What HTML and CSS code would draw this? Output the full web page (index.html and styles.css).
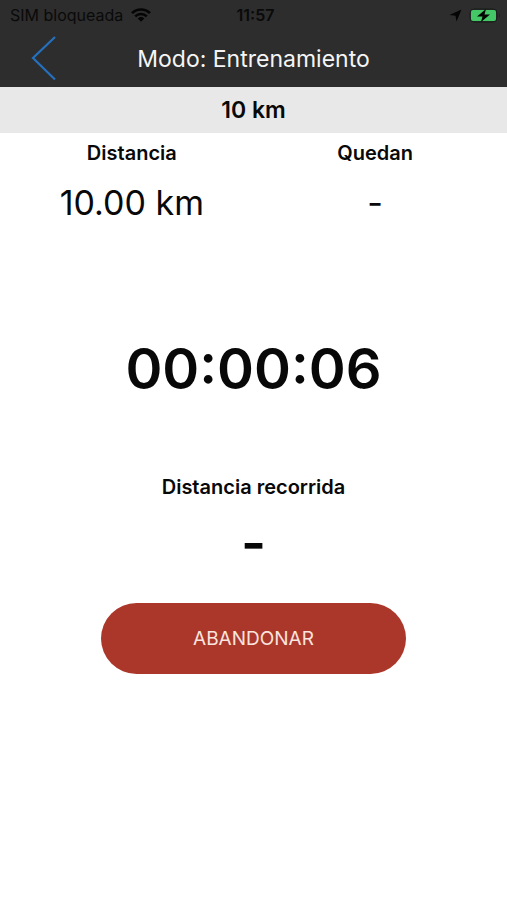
FILE: index.html
```html
<!DOCTYPE html>
<html lang="es">
<head>
<meta charset="utf-8">
<meta name="viewport" content="width=device-width, initial-scale=1">
<title>Modo: Entrenamiento</title>
<link rel="stylesheet" href="styles.css">
</head>
<body>
<header class="top">
  <div class="status">
    <div class="carrier">
      <span>SIM bloqueada</span>
      <svg width="20" height="14" viewBox="0 0 20 14" aria-hidden="true">
        <g fill="none" stroke="#050505" stroke-width="2.6"><path d="M1 5.2C6 .2 14 .2 19 5.2"/><path d="M4.2 8.4C7.5 5.1 12.500 5.100 15.800 8.400"/></g>
        <path fill="#050505" d="M6.700 10.500Q10 7.600 13.300 10.500L10 13.800Z"/>
      </svg>
    </div>
    <time class="clock">11:57</time>
    <div class="indicators">
      <svg width="13" height="13" viewBox="0 0 13 13" aria-hidden="true"><path fill="#050505" d="M12.500 .5 7.500 12.500 6.500 6.700 .500 6Z"/></svg>
      <svg width="32" height="15" viewBox="0 0 32 15" aria-hidden="true">
        <rect x="1" y="1" width="27" height="13" rx="4" fill="none" stroke="#171e19"/>
        <rect x="2" y="2" width="25" height="11" rx="2" fill="#43c767"/>
        <path fill="#1d2420" d="M30 5q2 2.500 0 5Z"/>
        <path fill="#050505" d="M17 1 8 8.500H13.500L12 14 21 6.500H15.500Z"/>
      </svg>
    </div>
  </div>
  <nav class="nav">
    <a class="back" href="#" aria-label="Volver">
      <svg width="26" height="46" viewBox="0 0 26 46" aria-hidden="true"><path d="M24 1 2 22 24 43.500" fill="none" stroke="#2470bd" stroke-width="2.200"/></svg>
    </a>
    <h1 class="title">Modo: Entrenamiento</h1>
  </nav>
</header>
<main>
  <h2 class="goal">10 km</h2>
  <dl class="stats">
    <div><dt class="label">Distancia</dt><dd class="value">10.00 km</dd></div>
    <div><dt class="label">Quedan</dt><dd class="value">-</dd></div>
  </dl>
  <div class="timer" role="timer">00:00:06</div>
  <dl class="covered">
    <dt class="label">Distancia recorrida</dt>
    <dd class="covered-value">-</dd>
  </dl>
  <button class="quit" type="button">ABANDONAR</button>
</main>
</body>
</html>
```
FILE: styles.css
```css
* { box-sizing: border-box; }
body {
  margin: 0;
  background: #fff;
  color: #080808;
  font-family: Inter, "Liberation Sans", sans-serif;
}
h1, h2, dl, dd { margin: 0; }
svg { display: block; }
.top { background: #2d2d2d; }
.status {
  display: grid;
  grid-template-columns: 1fr auto 1fr;
  align-items: center;
  height: 30px;
  padding: 0 6px 0 10px;
  color: #0a0a0a;
  font-size: 16px;
}
.carrier { display: flex; align-items: center; gap: 8px; }
.clock { font-weight: 600; }
.indicators { display: flex; align-items: center; justify-content: flex-end; gap: 7px; }
.nav {
  display: grid;
  grid-template-columns: 64px 1fr 64px;
  align-items: center;
  height: 57px;
}
.back { padding-left: 31px; }
.title {
  color: #f5f5f5;
  font-size: 23px;
  font-weight: 400;
  line-height: 30px;
  text-align: center;
}
.goal {
  padding: 8px 0;
  background: #e8e8e8;
  font-size: 23px;
  font-weight: 600;
  line-height: 30px;
  text-align: center;
}
.stats {
  display: grid;
  grid-template-columns: 1fr 1fr;
  padding: 8px 2% 0;
  text-align: center;
}
.label { font-size: 20px; font-weight: 600; line-height: 24px; }
.value { margin-top: 16px; font-size: 34px; line-height: 44px; }
.timer {
  margin-top: 108px;
  font-size: 56px;
  font-weight: 600;
  line-height: 72px;
  text-align: center;
}
.covered { margin-top: 70px; text-align: center; }
.covered-value { margin-top: 14px; font-size: 54px; font-weight: 600; line-height: 60px; }
.quit {
  display: block;
  width: 60%;
  height: 71px;
  margin: 30px auto 0;
  border: 0;
  border-radius: 36px;
  background: #aa3729;
  color: #f9e4df;
  font: 400 19px/24px Inter, "Liberation Sans", sans-serif;
}
```
